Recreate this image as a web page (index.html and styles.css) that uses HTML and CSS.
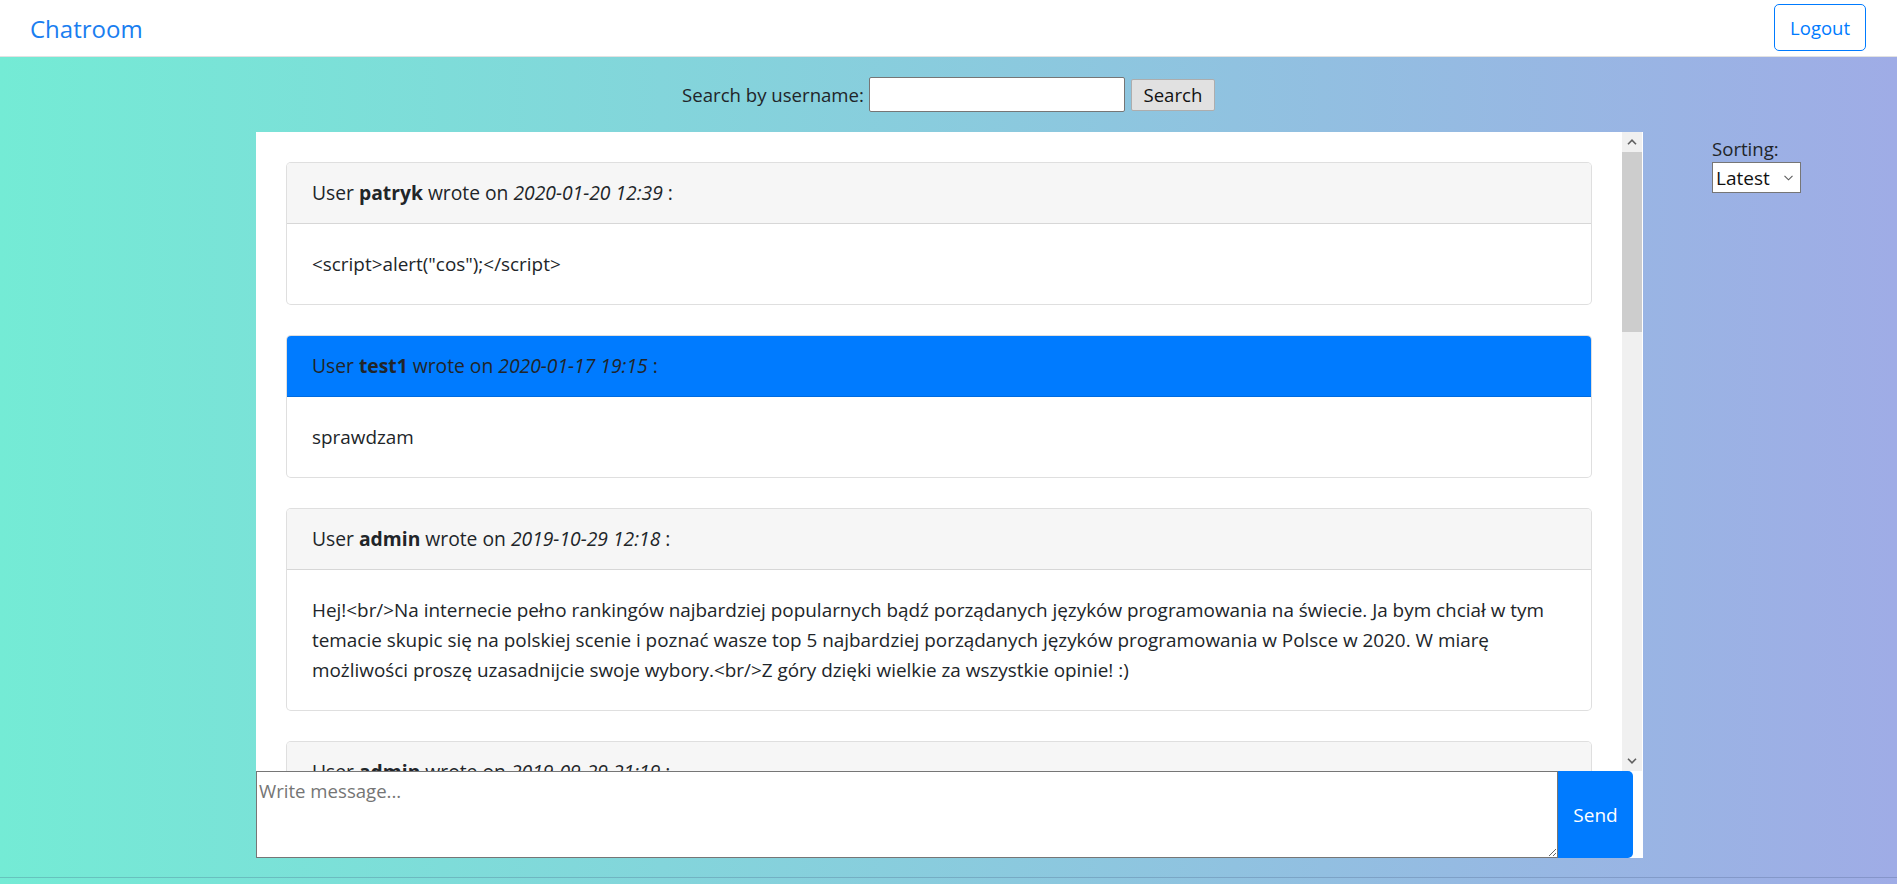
FILE: index.html
```html
<!DOCTYPE html>
<html lang="pl">
<head>
<meta charset="utf-8">
<title>Chatroom</title>
<link rel="stylesheet" href="styles.css">
</head>
<body>
<nav class="navbar">
  <a class="brand" href="#">Chatroom</a>
  <button class="btn-logout" type="button">Logout</button>
</nav>
<main class="main">
  <form class="search">
    <label class="search-label" for="q">Search by username:</label>
    <input class="search-input" id="q" type="text">
    <button class="search-btn" type="button">Search</button>
  </form>
  <div class="layout">
    <div class="spacer"></div>
    <section class="chat">
      <div class="chat-body">
        <div class="chat-scroll">
          <div class="card">
            <div class="card-header">User <b>patryk</b> wrote on <i>2020-01-20 12:39</i> :</div>
            <div class="card-body">&lt;script&gt;alert("cos");&lt;/script&gt;</div>
          </div>
          <div class="card">
            <div class="card-header card-header-primary">User <b>test1</b> wrote on <i>2020-01-17 19:15</i> :</div>
            <div class="card-body">sprawdzam</div>
          </div>
          <div class="card">
            <div class="card-header">User <b>admin</b> wrote on <i>2019-10-29 12:18</i> :</div>
            <div class="card-body">Hej!&lt;br/&gt;Na internecie pełno rankingów najbardziej popularnych bądź porządanych języków programowania na świecie. Ja bym chciał w tym temacie skupic się na polskiej scenie i poznać wasze top 5 najbardziej porządanych języków programowania w Polsce w 2020. W miarę możliwości proszę uzasadnijcie swoje wybory.&lt;br/&gt;Z góry dzięki wielkie za wszystkie opinie! :)</div>
          </div>
          <div class="card">
            <div class="card-header">User <b>admin</b> wrote on <i>2019-09-29 21:19</i> :</div>
            <div class="card-body">Witajcie na czacie!</div>
          </div>
          <div class="card">
            <div class="card-header">User <b>patryk</b> wrote on <i>2019-09-28 18:02</i> :</div>
            <div class="card-body">Cześć wszystkim</div>
          </div>
        </div>
        <div class="scrollbar" aria-hidden="true">
          <div class="sb-btn">
            <svg width="10" height="6" viewBox="0 0 10 6"><path d="M1 5.2L5 1.2L9 5.2" fill="none" stroke="#606060" stroke-width="1.6"/></svg>
          </div>
          <div class="sb-thumb"></div>
          <div class="sb-track"></div>
          <div class="sb-btn">
            <svg width="10" height="6" viewBox="0 0 10 6"><path d="M1 0.8L5 4.8L9 0.8" fill="none" stroke="#606060" stroke-width="1.6"/></svg>
          </div>
        </div>
      </div>
      <div class="composer">
        <textarea class="composer-input" placeholder="Write message..."></textarea>
        <button class="composer-send" type="button">Send</button>
      </div>
    </section>
    <aside class="sorting">
      <label class="sorting-label" for="sort">Sorting:</label>
      <div class="select-wrap">
        <select class="sorting-select" id="sort">
          <option>Latest</option>
          <option>Oldest</option>
        </select>
        <svg class="select-chevron" width="9" height="6" viewBox="0 0 9 6"><path d="M0.5 0.8L4.5 4.8L8.5 0.8" fill="none" stroke="#5a5a5a" stroke-width="1.1"/></svg>
      </div>
    </aside>
  </div>
</main>
<footer class="footer"></footer>
</body>
</html>
```

FILE: styles.css
```css
html {
  overflow: hidden;
}

body {
  margin: 0;
  height: 884px;
  font-family: "Open Sans", "Liberation Sans", Arial, sans-serif;
  font-size: 19.3px;
  line-height: 30px;
  color: #212529;
  background: linear-gradient(to right, #74ebd5, #9face6);
}

.navbar {
  display: flex;
  align-items: center;
  justify-content: space-between;
  height: 56px;
  padding: 0 31px 0 30px;
  background: #fff;
  border-bottom: 1px solid #e2e2e2;
}

.brand {
  color: #1a7ef0;
  text-decoration: none;
  font-size: 24px;
  line-height: 1;
  padding-top: 2px;
}

.btn-logout {
  font-family: inherit;
  font-size: 18.5px;
  line-height: 30px;
  padding: 7.5px 15px;
  color: #007bff;
  background: transparent;
  border: 1px solid #007bff;
  border-radius: 5px;
  margin-top: -1px;
}

.search {
  display: flex;
  align-items: center;
  justify-content: center;
  height: 75px;
  margin: 0;
}

.search-label {
  margin-right: 5px;
  font-size: 18.6px;
}

.search-input {
  box-sizing: border-box;
  width: 256px;
  height: 35px;
  padding: 1px 3px;
  border: 1px solid #767676;
  border-radius: 2px;
  background: #fff;
  font-family: inherit;
  font-size: 17px;
  margin-right: 6px;
}

.search-btn {
  box-sizing: border-box;
  width: 84px;
  height: 32px;
  padding: 0 6px;
  font-family: inherit;
  font-size: 18.6px;
  color: #111;
  background: #e1e1e1;
  border: 1px solid #adadad;
  border-radius: 2px;
}

.layout {
  display: grid;
  grid-template-columns: 256px 1387px 1fr;
  margin-bottom: 19px;
}

.chat {
  display: flex;
  flex-direction: column;
  background: #fff;
}

.chat-body {
  display: flex;
  height: 639px;
}

.chat-scroll {
  flex: 1;
  min-width: 0;
  overflow: hidden;
  padding: 30px 30px 0 30px;
}

.scrollbar {
  display: flex;
  flex-direction: column;
  width: 20px;
  background: #f0f0f0;
  margin-right: 1px;
}

.sb-btn {
  display: flex;
  align-items: center;
  justify-content: center;
  height: 20px;
}

.sb-thumb {
  height: 180px;
  background: #cdcdcd;
}

.sb-track {
  flex: 1;
}

.card {
  border: 1px solid rgba(0, 0, 0, 0.125);
  border-radius: 5px;
  margin-bottom: 30px;
  overflow: hidden;
  background: #fff;
}

.card-header {
  padding: 15px 25px;
  background: #f6f6f6;
  border-bottom: 1px solid rgba(0, 0, 0, 0.125);
}

.card-header-primary {
  background: #007bff;
}

.card-body {
  padding: 25px;
  font-size: 18.9px;
}

.composer {
  display: flex;
  height: 87px;
  padding-right: 10px;
  background: #fff;
}

.composer-input {
  flex: 1;
  box-sizing: border-box;
  height: 87px;
  margin: 0;
  padding: 4px 2px 1px 2px;
  border: 1px solid #767676;
  font-family: inherit;
  font-size: 18.6px;
  line-height: 30px;
  color: #212529;
}

.composer-input::placeholder {
  color: #757575;
}

.composer-send {
  width: 75px;
  height: 87px;
  padding: 0;
  border: none;
  border-radius: 0 5px 5px 0;
  background: #007bff;
  color: #fff;
  font-family: inherit;
  font-size: 19px;
}

.sorting {
  padding: 4px 0 0 69px;
}

.sorting-label {
  display: block;
  line-height: 26px;
  font-size: 18.6px;
}

.select-wrap {
  position: relative;
  width: 89px;
}

.sorting-select {
  appearance: none;
  -webkit-appearance: none;
  box-sizing: border-box;
  width: 89px;
  height: 31px;
  padding: 0 20px 0 3px;
  border: 1px solid #767676;
  border-radius: 0;
  background: #fff;
  font-family: inherit;
  font-size: 19px;
  color: #111;
}

.select-chevron {
  position: absolute;
  right: 8px;
  top: 13px;
  pointer-events: none;
}

.footer {
  height: 7px;
  border-top: 1px solid rgba(60, 80, 120, 0.25);
}
```
